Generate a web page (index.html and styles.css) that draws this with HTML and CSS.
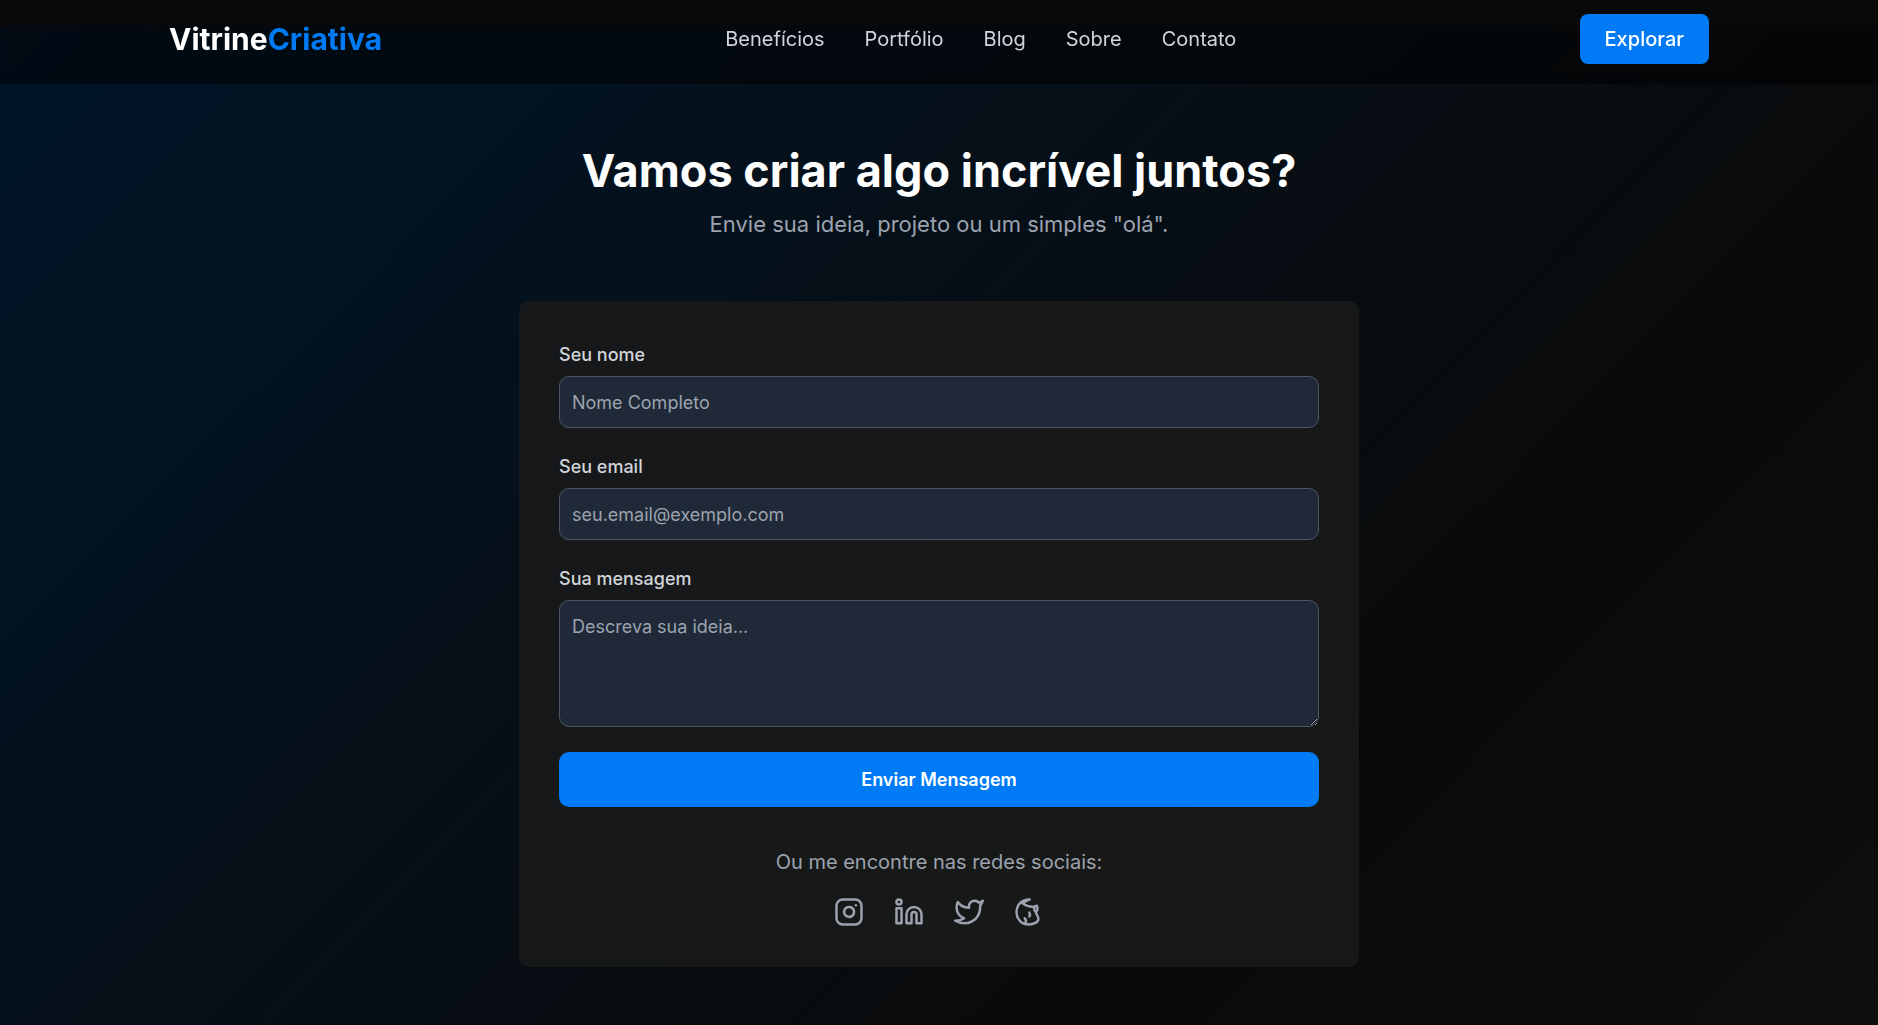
FILE: index.html
```html
<!DOCTYPE html>
<html lang="pt-BR">
<head>
<meta charset="utf-8">
<meta name="viewport" content="width=device-width, initial-scale=1">
<title>VitrineCriativa</title>
<link rel="stylesheet" href="styles.css">
</head>
<body>
<header class="header">
  <div class="container header-inner">
    <a class="logo" href="#">Vitrine<span class="logo-accent">Criativa</span></a>
    <nav class="nav">
      <a class="nav-link" href="#beneficios">Benefícios</a>
      <a class="nav-link" href="#portfolio">Portfólio</a>
      <a class="nav-link" href="#blog">Blog</a>
      <a class="nav-link" href="#sobre">Sobre</a>
      <a class="nav-link" href="#contato">Contato</a>
    </nav>
    <button class="explore" type="button">Explorar</button>
  </div>
</header>
<main class="contact" id="contato">
  <h1 class="title">Vamos criar algo incrível juntos?</h1>
  <p class="subtitle">Envie sua ideia, projeto ou um simples "olá".</p>
  <section class="card">
    <form class="form">
      <div class="field">
        <label class="label" for="nome">Seu nome</label>
        <input class="control" id="nome" type="text" placeholder="Nome Completo">
      </div>
      <div class="field">
        <label class="label" for="email">Seu email</label>
        <input class="control" id="email" type="email" placeholder="seu.email@exemplo.com">
      </div>
      <div class="field">
        <label class="label" for="mensagem">Sua mensagem</label>
        <textarea class="control message" id="mensagem" placeholder="Descreva sua ideia..."></textarea>
      </div>
      <button class="submit" type="submit">Enviar Mensagem</button>
    </form>
    <p class="social-text">Ou me encontre nas redes sociais:</p>
    <div class="social">
      <a class="social-link" href="#" aria-label="Instagram"><svg class="icon" viewBox="0 0 24 24"><rect x="2" y="2" width="20" height="20" rx="5"/><path d="M16 11.37A4 4 0 1 1 12.63 8 4 4 0 0 1 16 11.37z"/><path d="M17.5 6.5h.01"/></svg></a>
      <a class="social-link" href="#" aria-label="LinkedIn"><svg class="icon" viewBox="0 0 24 24"><path d="M16 8a6 6 0 0 1 6 6v7h-4v-7a2 2 0 0 0-4 0v7h-4v-7a6 6 0 0 1 6-6z"/><rect x="2" y="9" width="4" height="12"/><circle cx="4" cy="4" r="2"/></svg></a>
      <a class="social-link" href="#" aria-label="Twitter"><svg class="icon" viewBox="0 0 24 24"><path d="M23 3a10.9 10.9 0 0 1-3.14 1.53 4.48 4.48 0 0 0-7.86 3v1A10.66 10.66 0 0 1 3 4s-4 9 5 13a11.64 11.64 0 0 1-7 2c9 5 20 0 20-11.5a4.5 4.5 0 0 0-.08-.83A7.72 7.72 0 0 0 23 3z"/></svg></a>
      <a class="social-link" href="#" aria-label="Comunidade"><svg class="icon" viewBox="0 0 24 24"><path d="M12.500 2C6 2 2 6.500 2 12s4 10 9.500 10c4.500 0 8-2 8-4.500 0-2-1.500-3-2-5.500 1.500-1 1.500-3 .8-5C15 8.500 10.500 7.500 6.500 4.800 8.500 4.300 10.500 2.500 12.500 2z"/><path d="M17.500 12c-1-.8-1.500-2-1.500-3.500M12.300 12.500c.6 1 .6 2 0 3M8.500 17c1.200 1 1.200 3 .5 4.300"/></svg></a>
    </div>
  </section>
</main>
</body>
</html>
```
FILE: styles.css
```css
* {
  box-sizing: border-box;
}

body {
  margin: 0;
  min-height: 100vh;
  padding-top: 27px;
  display: flex;
  flex-direction: column;
  background: #121212;
  color: #fff;
  font-family: Inter, "Liberation Sans", sans-serif;
  font-size: 18px;
  line-height: 27px;
}

a {
  color: inherit;
  text-decoration: none;
}

button,
input,
textarea {
  font: inherit;
}

.header {
  position: fixed;
  top: 0;
  left: 0;
  right: 0;
  z-index: 1;
  padding: 14px 20px 20px;
  background: rgba(0, 0, 0, 0.5);
  backdrop-filter: blur(4px);
}

.container {
  max-width: 1540px;
  margin: 0 auto;
}

.header-inner {
  display: flex;
  align-items: center;
  justify-content: space-between;
}

.logo {
  font-size: 30px;
  font-weight: 700;
}

.logo-accent {
  color: #007bf5;
}

.nav {
  display: flex;
  gap: 40px;
}

.nav-link {
  color: #d1d5db;
  font-size: 20px;
}

.explore {
  height: 50px;
  padding: 0 25px;
  border: 0;
  border-radius: 8px;
  background: #007bf5;
  color: #fff;
  font-size: 20px;
  font-weight: 500;
}

.contact {
  flex: 1;
  padding: 112px 20px 58px;
  background: linear-gradient(135deg, #001629 0%, #0a0a0a 72%, #0e0e0e 100%);
}

.title {
  margin: 0;
  font-size: 45px;
  font-weight: 700;
  line-height: 64px;
  text-align: center;
}

.subtitle {
  margin: 4px 0 60px;
  color: #9ca3af;
  font-size: 22px;
  line-height: 34px;
  text-align: center;
}

.card {
  max-width: 840px;
  margin: 0 auto;
  padding: 40px;
  border-radius: 10px;
  background: rgba(26, 26, 26, 0.9);
}

.form {
  display: flex;
  flex-direction: column;
  gap: 25px;
}

.field {
  display: flex;
  flex-direction: column;
  gap: 8px;
}

.label {
  color: #d1d5db;
  font-weight: 500;
}

.control {
  width: 100%;
  height: 52px;
  padding: 12px;
  border: 1px solid #4b5563;
  border-radius: 10px;
  background: #1f2937;
  color: #fff;
}

.control::placeholder {
  color: #9ca3af;
}

.message {
  height: 127px;
  resize: vertical;
}

.submit {
  height: 55px;
  border: 0;
  border-radius: 10px;
  background: #007bf5;
  color: #fff;
  font-weight: 600;
}

.social-text {
  margin: 40px 0 20px;
  color: #9ca3af;
  font-size: 20px;
  line-height: 30px;
  text-align: center;
}

.social {
  display: flex;
  justify-content: center;
  gap: 30px;
}

.social-link {
  display: flex;
  color: #9ca3af;
}

.icon {
  width: 30px;
  height: 30px;
  fill: none;
  stroke: currentColor;
  stroke-width: 2;
  stroke-linecap: round;
  stroke-linejoin: round;
}
```
